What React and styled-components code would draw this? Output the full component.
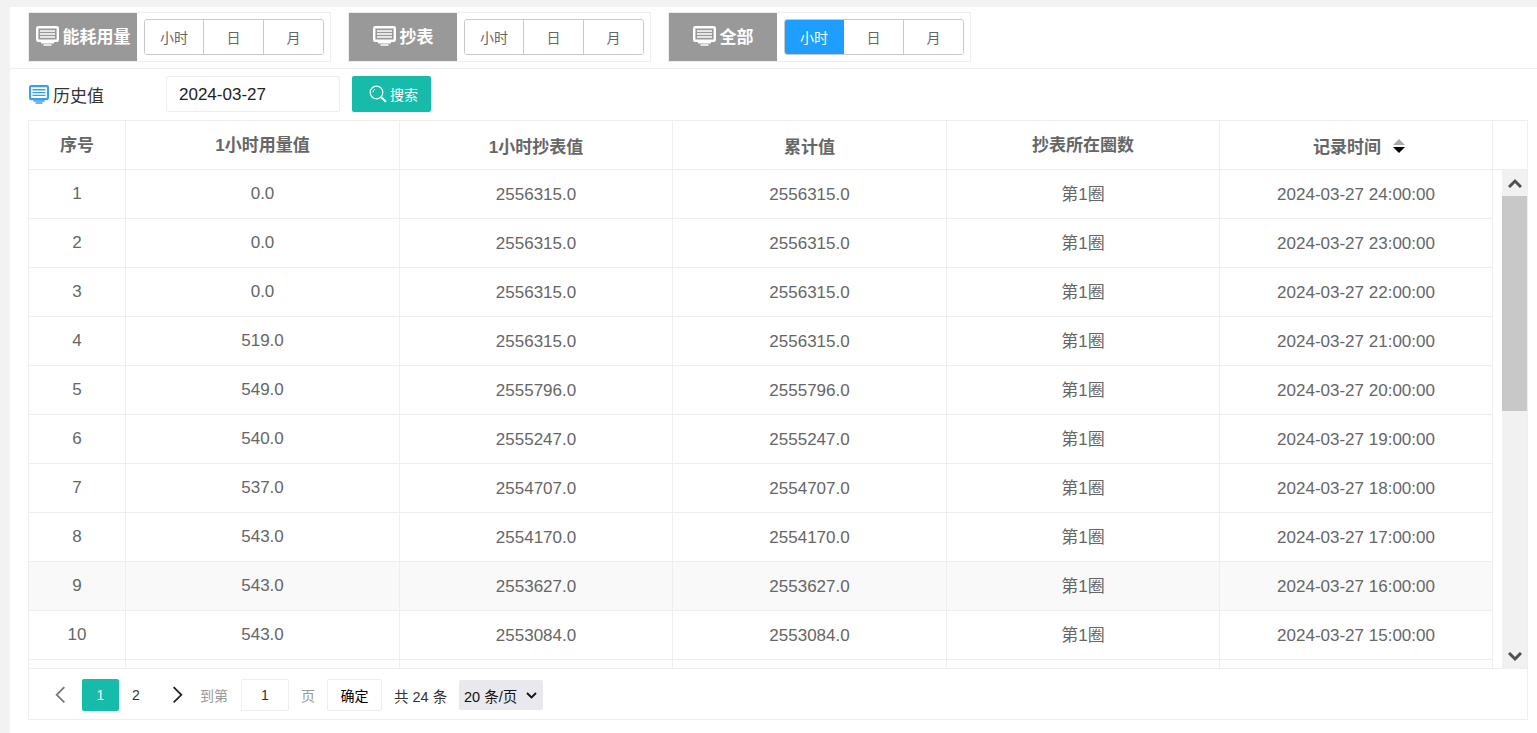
import React from "react";
import styled, { createGlobalStyle } from "styled-components";

const FONT = '"Liberation Sans", "Noto Sans CJK SC", sans-serif';

const Global = createGlobalStyle`
  html, body { margin: 0; padding: 0; background: #f2f2f2; height: 100%; overflow: hidden; }
  body { font-family: ${FONT}; }
  * { box-sizing: border-box; }
`;

const Page = styled.div`
  height: 733px;
  padding: 7px 0 0 10px;
  background: #f2f2f2;
`;
const Panel = styled.div`
  height: 726px;
  background: #fff;
  display: flex;
  flex-direction: column;
`;
const Toolbar = styled.div`
  height: 62px;
  padding: 5px 0 0 18px;
  display: flex;
  gap: 17px;
  border-bottom: 1px solid #eeeeee;
`;
const Group = styled.div`
  width: 303px;
  height: 50px;
  border: 1px solid #eeeeee;
  display: flex;
  align-items: center;
`;
const GroupLabel = styled.div`
  width: 108px;
  height: 48px;
  background: #999999;
  color: #fff;
  font-size: 17px;
  font-weight: 700;
  display: flex;
  align-items: center;
  justify-content: center;
  gap: 4px;
  padding-bottom: 3px;
  white-space: nowrap;
`;
const Segments = styled.div`
  margin-left: 7px;
  width: 180px;
  height: 36px;
  display: flex;
  border: 1px solid #c9c9c9;
  border-radius: 3px;
  overflow: hidden;
`;
const Segment = styled.div`
  flex: 0 0 ${(p) => (p.$active ? "60px" : p.$first ? "58px" : "60px")};
  display: flex;
  align-items: center;
  justify-content: center;
  font-size: 14px;
  position: relative;
  z-index: ${(p) => (p.$active ? 1 : 0)};
  color: ${(p) => (p.$active ? "#fff" : "#666")};
  background: ${(p) => (p.$active ? "#1e9fff" : "#fff")};
  border-left: ${(p) => (p.$first ? "0" : "1px solid #c9c9c9")};
  margin: ${(p) => (p.$active ? "-1px -1px -1px -1px" : "0")};
`;
const FilterRow = styled.div`
  height: 51px;
  padding: 7px 0 0 18px;
  display: flex;
  align-items: flex-start;
`;
const FilterTitle = styled.div`
  width: 138px;
  height: 36px;
  display: flex;
  align-items: center;
  gap: 4px;
  padding-left: 1px;
  font-size: 17px;
  color: #333;
`;
const DateInput = styled.div`
  width: 174px;
  height: 36px;
  border: 1px solid #eeeeee;
  border-radius: 2px;
  padding: 2px 0 0 12px;
  font-size: 17px;
  color: #222;
  display: flex;
  align-items: center;
`;
const SearchButton = styled.div`
  margin-left: 12px;
  width: 79px;
  height: 36px;
  border-radius: 2px;
  background: #17bbaa;
  color: #fff;
  font-size: 14px;
  display: flex;
  align-items: center;
  justify-content: center;
  gap: 3px;
  padding-left: 4px;
`;
const TableWrap = styled.div`
  margin-left: 18px;
  width: 1500px;
  height: 600px;
  border: 1px solid #eeeeee;
  display: flex;
  flex-direction: column;
`;
const COLS = "97px 274px 273px 274px 273px 273px";
const HeadRow = styled.div`
  flex: 0 0 49px;
  display: grid;
  grid-template-columns: ${COLS} 1fr;
  border-bottom: 1px solid #eeeeee;
`;
const HeadCell = styled.div`
  display: flex;
  align-items: center;
  justify-content: center;
  gap: 12px;
  font-size: 17px;
  font-weight: 700;
  color: #666;
  border-right: ${(p) => (p.$last ? "0" : "1px solid #eeeeee")};
  padding-bottom: ${(p) => (p.$high ? "3px" : "0")};
  padding-top: ${(p) => (p.$high ? "0" : "1px")};
  padding-left: ${(p) => (p.$sort ? "6px" : "0")};
`;
const BodyArea = styled.div`
  flex: 0 0 499px;
  display: flex;
  overflow: hidden;
  border-bottom: 1px solid #eeeeee;
`;
const Rows = styled.div`
  flex: 0 0 1464px;
  overflow: hidden;
  height: 498px;
`;
const Row = styled.div`
  height: 49px;
  display: grid;
  grid-template-columns: ${COLS};
  border-bottom: 1px solid #eeeeee;
  background: ${(p) => (p.$hover ? "#f9f9f9" : "#fff")};
`;
const Cell = styled.div`
  display: flex;
  align-items: center;
  justify-content: center;
  font-size: 17px;
  color: #666;
  border-right: 1px solid #eeeeee;
  padding-top: ${(p) => (p.$low ? "2px" : "0")};
  padding-bottom: ${(p) => (p.$cjk ? "4px" : "0")};
`;
const Scrollbar = styled.div`
  margin-left: 9px;
  width: 25px;
  height: 498px;
  background: #f1f1f1;
  display: flex;
  flex-direction: column;
`;
const ScrollArrow = styled.div`
  flex: 0 0 ${(p) => p.$h}px;
  display: flex;
  align-items: center;
  justify-content: center;
`;
const ScrollThumb = styled.div`
  flex: 0 0 215px;
  background: #c8c8c8;
`;
const ScrollTrack = styled.div`
  flex: 1;
`;
const Pager = styled.div`
  flex: 1;
  display: flex;
  align-items: center;
  padding: 2px 0 0 17px;
  font-size: 14px;
  color: #666;
`;
const PageArrow = styled.div`
  width: 36px;
  height: 32px;
  display: flex;
  align-items: center;
  justify-content: center;
  padding: ${(p) => (p.$prev ? "0 8px 0 0" : "0 0 0 6px")};
`;
const PageNum = styled.div`
  width: 37px;
  height: 32px;
  border-radius: 2px;
  display: flex;
  align-items: center;
  justify-content: center;
  padding-right: ${(p) => (p.$active ? "0" : "3px")};
  color: ${(p) => (p.$active ? "#fff" : "#333")};
  background: ${(p) => (p.$active ? "#17bbaa" : "transparent")};
`;
const PagerHint = styled.span`
  color: #999;
  font-size: 14px;
  margin-left: ${(p) => p.$ml}px;
`;
const PageInput = styled.div`
  margin-left: 13px;
  width: 48px;
  height: 32px;
  border: 1px solid #eeeeee;
  border-radius: 2px;
  display: flex;
  align-items: center;
  justify-content: center;
  color: #333;
`;
const ConfirmBtn = styled.div`
  margin-left: 12px;
  width: 55px;
  height: 32px;
  border: 1px solid #eeeeee;
  border-radius: 2px;
  display: flex;
  align-items: center;
  justify-content: center;
  color: #000;
`;
const Total = styled.span`
  margin-left: 12px;
  width: 53px;
  color: #333;
  font-size: 14.5px;
  white-space: pre;
`;
const SizeSelect = styled.div`
  margin-left: 12px;
  width: 84px;
  height: 30px;
  background: #e8e8ed;
  border-radius: 2px;
  display: flex;
  align-items: center;
  padding-left: 5px;
  gap: 9px;
  font-size: 14.5px;
  color: #111;
  white-space: nowrap;
`;

const Monitor = ({ color = "#fff", w = 23, h = 20 }) => (
  <svg width={w} height={h} viewBox="0 0 23 20" preserveAspectRatio="none" fill="none">
    <rect x="1.2" y="1.2" width="20.6" height="13.6" rx="1" stroke={color} strokeWidth="2.4" fill={color === "#fff" ? "none" : "#fff"} />
    <path d="M4 5h15M4 8h15M4 11h15" stroke={color} strokeWidth="1.4" />
    <path d="M5 16.8h13M7.5 19h8" stroke={color} strokeWidth="1.6" />
  </svg>
);
const SearchIcon = () => (
  <svg width="18" height="18" viewBox="0 0 18 18" fill="none" stroke="#fff">
    <circle cx="7.5" cy="7.5" r="6.3" strokeWidth="1.2" />
    <path d="M4 7.5a4 4 0 0 1 2-3.4" strokeWidth="1" />
    <path d="M12.3 12.3l4.5 4.5" strokeWidth="2.2" />
  </svg>
);
const Chevron = ({ dir, color, w = 11, sw = 1.6 }) => (
  <svg width={w} height={w * 1.6} viewBox="0 0 10 16" fill="none" stroke={color} strokeWidth={sw}>
    <path d={dir === "left" ? "M8.5 1L1.5 8l7 7" : "M1.5 1l7 7-7 7"} />
  </svg>
);
const ScrollChevron = ({ up }) => (
  <svg width="14" height="10" viewBox="0 0 14 10" fill="none" stroke="#505050" strokeWidth="3">
    <path d={up ? "M1 9l6-6 6 6" : "M1 1l6 6 6-6"} />
  </svg>
);
const SortCaret = () => (
  <svg width="12" height="14" viewBox="0 0 12 14">
    <path d="M6 0l6 6H0z" fill="#aaa" />
    <path d="M6 14l6-6H0z" fill="#000" />
  </svg>
);
const SelectCaret = () => (
  <svg width="11" height="7" viewBox="0 0 11 7" fill="none" stroke="#111" strokeWidth="1.8">
    <path d="M1 1l4.5 4.5L10 1" />
  </svg>
);

const groups = [
  { label: "能耗用量" },
  { label: "抄表" },
  { label: "全部", active: true },
];
const data = [
  ["1", "0.0", "2556315.0", "2556315.0", "24"],
  ["2", "0.0", "2556315.0", "2556315.0", "23"],
  ["3", "0.0", "2556315.0", "2556315.0", "22"],
  ["4", "519.0", "2556315.0", "2556315.0", "21"],
  ["5", "549.0", "2555796.0", "2555796.0", "20"],
  ["6", "540.0", "2555247.0", "2555247.0", "19"],
  ["7", "537.0", "2554707.0", "2554707.0", "18"],
  ["8", "543.0", "2554170.0", "2554170.0", "17"],
  ["9", "543.0", "2553627.0", "2553627.0", "16"],
  ["10", "543.0", "2553084.0", "2553084.0", "15"],
];

export default function App() {
  return (
    <Page>
      <Global />
      <Panel>
        <Toolbar>
          {groups.map((g) => (
            <Group key={g.label}>
              <GroupLabel>
                <Monitor />
                {g.label}
              </GroupLabel>
              <Segments>
                <Segment $first $active={g.active}>小时</Segment>
                <Segment>日</Segment>
                <Segment>月</Segment>
              </Segments>
            </Group>
          ))}
        </Toolbar>
        <FilterRow>
          <FilterTitle>
            <Monitor color="#3b9ff0" w={20} h={19} />
            历史值
          </FilterTitle>
          <DateInput>2024-03-27</DateInput>
          <SearchButton>
            <SearchIcon />
            搜索
          </SearchButton>
        </FilterRow>
        <TableWrap>
          <HeadRow>
            <HeadCell $high>序号</HeadCell>
            <HeadCell $high>1小时用量值</HeadCell>
            <HeadCell>1小时抄表值</HeadCell>
            <HeadCell>累计值</HeadCell>
            <HeadCell $high>抄表所在圈数</HeadCell>
            <HeadCell $sort>
              记录时间
              <SortCaret />
            </HeadCell>
            <HeadCell $last />
          </HeadRow>
          <BodyArea>
            <Rows>
              {data.map((r, i) => (
                <Row key={r[0]} $hover={i === 8}>
                  <Cell>{r[0]}</Cell>
                  <Cell>{r[1]}</Cell>
                  <Cell $low>{r[2]}</Cell>
                  <Cell $low>{r[3]}</Cell>
                  <Cell $cjk>第1圈</Cell>
                  <Cell $low>{`2024-03-27 ${r[4]}:00:00`}</Cell>
                </Row>
              ))}
              <Row>
                <Cell />
                <Cell />
                <Cell />
                <Cell />
                <Cell />
                <Cell />
              </Row>
            </Rows>
            <Scrollbar>
              <ScrollArrow $h={26}>
                <ScrollChevron up />
              </ScrollArrow>
              <ScrollThumb />
              <ScrollTrack />
              <ScrollArrow $h={22}>
                <ScrollChevron />
              </ScrollArrow>
            </Scrollbar>
          </BodyArea>
          <Pager>
            <PageArrow $prev>
              <Chevron dir="left" color="#777" />
            </PageArrow>
            <PageNum $active>1</PageNum>
            <PageNum>2</PageNum>
            <PageArrow>
              <Chevron dir="right" color="#222" />
            </PageArrow>
            <PagerHint $ml={8}>到第</PagerHint>
            <PageInput>1</PageInput>
            <PagerHint $ml={12}>页</PagerHint>
            <ConfirmBtn>确定</ConfirmBtn>
            <Total>共 24 条</Total>
            <SizeSelect>
              20 条/页
              <SelectCaret />
            </SizeSelect>
          </Pager>
        </TableWrap>
      </Panel>
    </Page>
  );
}
